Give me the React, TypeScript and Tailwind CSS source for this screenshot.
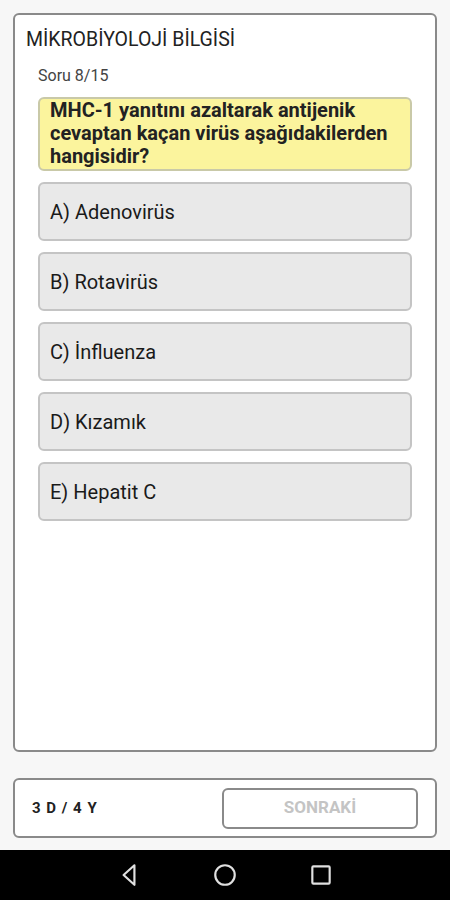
import React from 'react';

const options = ['A) Adenovirüs', 'B) Rotavirüs', 'C) İnfluenza', 'D) Kızamık', 'E) Hepatit C'];

export default function App() {
  return (
    <div className="w-[450px] h-[900px] bg-[#f7f7f7] flex flex-col font-['Roboto',sans-serif] text-[#1a1a1a]">
      {/* Quiz card */}
      <div className="mx-[13px] mt-[13px] h-[739px] bg-white border-2 border-[#8a8a8a] rounded-[6px] flex flex-col">
        <div className="pl-[11px] pt-[13px] text-[19.5px] leading-[24px] text-[#222]">MİKROBİYOLOJİ BİLGİSİ</div>
        <div className="pl-[23px] mt-[15px] text-[16px] leading-[18px] text-[#444]">Soru 8/15</div>
        <div className="mx-[23px] mt-[12px] flex flex-col gap-[11px]">
          <div className="h-[74px] bg-[#fbf49d] border-2 border-[#c9c9a8] rounded-[6px] px-[10px] text-[20px] leading-[23px] font-bold text-[#222]">
            MHC-1 yanıtını azaltarak antijenik cevaptan kaçan virüs aşağıdakilerden hangisidir?
          </div>
          {options.map((o) => (
            <div key={o} className="h-[59px] bg-[#e9e9e9] border-2 border-[#c4c4c4] rounded-[6px] flex items-center px-[10px] text-[20px] text-[#1a1a1a]">
              {o}
            </div>
          ))}
        </div>
      </div>

      {/* Bottom bar */}
      <div className="mx-[13px] mt-[26px] h-[60px] bg-white border-2 border-[#8a8a8a] rounded-[6px] flex items-center justify-between pl-[17px] pr-[17px]">
        <span className="text-[15px] font-bold tracking-[1px] text-[#222]">3 D / 4 Y</span>
        <button className="w-[196px] h-[41px] border-2 border-[#8a8a8a] rounded-[6px] text-[17px] font-bold text-[#c4c4c4] bg-white">
          SONRAKİ
        </button>
      </div>

      {/* Android nav bar */}
      <div className="mt-auto h-[50px] bg-black flex items-center justify-center gap-[70px]">
        <svg width="26" height="26" viewBox="0 0 24 24" fill="none" stroke="#e0e0e0" strokeWidth="2" strokeLinejoin="round">
          <path d="M17 3 L7 12 L17 21 Z" />
        </svg>
        <svg width="26" height="26" viewBox="0 0 24 24" fill="none" stroke="#e0e0e0" strokeWidth="2">
          <circle cx="12" cy="12" r="9" />
        </svg>
        <svg width="26" height="26" viewBox="0 0 24 24" fill="none" stroke="#e0e0e0" strokeWidth="2">
          <rect x="4" y="4" width="16" height="16" rx="1" />
        </svg>
      </div>
    </div>
  );
}
